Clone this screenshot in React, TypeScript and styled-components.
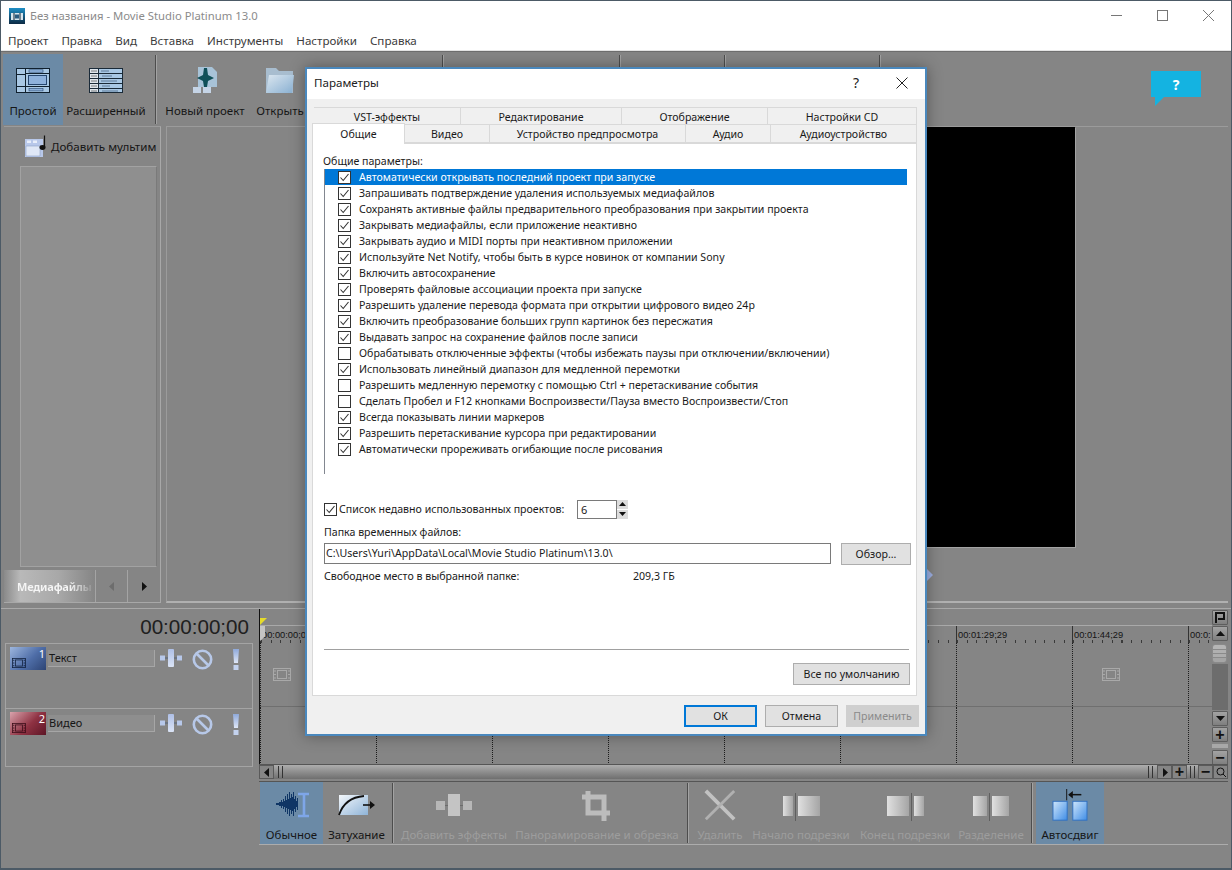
import React from 'react';
import styled, { createGlobalStyle } from 'styled-components';

const GlobalStyle = createGlobalStyle`
  html, body {
    margin: 0;
    padding: 0;
    background: #858585;
  }
  * { box-sizing: border-box; }
`;

const UI_FONT = `"Noto Sans", "Open Sans", sans-serif`;

const Shell = styled.div`
  position: relative;
  width: 1232px;
  height: 870px;
  overflow: hidden;
  display: flex;
  flex-direction: column;
  background: #858585;
  font-family: ${UI_FONT};
  font-size: 12px;
  color: #161616;
  border-left: 1px solid #4c5a66;
  border-right: 1px solid #4c5a66;
  border-top: 1px solid #4c5a66;
  border-bottom: 2px solid #4c5a66;
`;

const TitleBar = styled.div`
  height: 29px;
  display: flex;
  align-items: center;
  background: #fff;
  padding-left: 8px;
  color: #8b8b8b;
  font-size: 11.3px;
`;

const TitleText = styled.span`
  margin-left: 5px;
  flex: 1;
`;

const WinButton = styled.div`
  width: 46px;
  height: 29px;
  display: flex;
  align-items: center;
  justify-content: center;
`;

const MenuBar = styled.div`
  height: 21px;
  display: flex;
  align-items: center;
  gap: 13px;
  background: #fff;
  padding-left: 7px;
  color: #3c3c3c;
  font-size: 11.6px;
  border-bottom: 1px solid #e4e4e4;
`;

const TopToolbar = styled.div`
  height: 75px;
  display: flex;
  align-items: stretch;
  padding: 2px 0 1px 2px;
  border-top: 1px solid #6e6e6e;
`;

const ToolButton = styled.div<{ $w: number; $active?: boolean; $disabled?: boolean; $iconH?: number }>`
  width: ${(p) => p.$w}px;
  flex: none;
  display: flex;
  flex-direction: column;
  align-items: center;
  white-space: nowrap;
  background: ${(p) => (p.$active ? '#6b8aa6' : 'transparent')};
  color: ${(p) => (p.$disabled ? '#9d9d9d' : '#161616')};
  font-size: 11.5px;
  padding-top: 7px;
  > svg {
    height: ${(p) => p.$iconH ?? 38}px;
    flex: none;
  }
  > span {
    margin-top: 4px;
    line-height: 16px;
  }
`;

const ToolSep = styled.div<{ $before: number; $after?: number }>`
  width: 1px;
  flex: none;
  margin: 1px ${(p) => p.$after ?? 0}px 1px ${(p) => p.$before}px;
  background: #4d4d4d;
  box-shadow: 1px 0 0 #a3a3a3;
`;

const HelpBubble = styled.div`
  position: absolute;
  right: 30px;
  top: 70px;
  width: 50px;
  height: 26px;
  background: #14b3e1;
  color: #fff;
  font-weight: 700;
  font-size: 14px;
  display: flex;
  align-items: center;
  justify-content: center;
  &::after {
    content: '';
    position: absolute;
    left: 4px;
    top: 26px;
    border-top: 9px solid #14b3e1;
    border-right: 9px solid transparent;
  }
`;

const Workspace = styled.div`
  height: 477px;
  display: flex;
  gap: 5px;
  padding: 0 3px;
  flex: none;
`;

const MediaPanel = styled.div`
  width: 157px;
  flex: none;
  display: flex;
  flex-direction: column;
  border-top: 1px solid #9b9b9b;
  border-right: 1px solid #a8a8a8;
  border-bottom: 1px solid #a8a8a8;
  font-size: 11.6px;
`;

const AddMedia = styled.div`
  height: 39px;
  flex: none;
  display: flex;
  align-items: center;
  gap: 3px;
  padding-left: 20px;
  white-space: nowrap;
`;

const MediaList = styled.div`
  height: 401px;
  flex: none;
  margin-left: 16px;
  margin-right: 3px;
  background: #8f8f8f;
  border: 1px solid #a2a2a2;
  border-right-color: #7a7a7a;
`;

const MediaTabs = styled.div`
  flex: 1;
  margin-top: 3px;
  display: flex;
`;

const MediaTabLabel = styled.div`
  width: 91px;
  flex: none;
  display: flex;
  align-items: center;
  padding-left: 13px;
  white-space: nowrap;
  font-weight: 700;
  font-size: 11px;
  letter-spacing: -0.2px;
  background: linear-gradient(90deg, #8a8a8a 0%, #b9b9b9 18%, #a8a8a8 60%, #858585 100%);
`;

const FadedText = styled.span`
  background: linear-gradient(90deg, #f5f5f5 70%, rgba(245, 245, 245, 0.1));
  -webkit-background-clip: text;
  background-clip: text;
  color: transparent;
`;

const MediaNav = styled.div`
  width: 32px;
  display: flex;
  align-items: center;
  justify-content: center;
  border-left: 1px solid #a4a4a4;
`;

const PreviewPane = styled.div`
  position: relative;
  flex: 1;
  display: flex;
  justify-content: flex-end;
  align-items: flex-start;
  padding-right: 153px;
  border-top: 1px solid #9b9b9b;
  border-left: 1px solid #9b9b9b;
  border-bottom: 2px solid #b0b0b0;
`;

const PreviewScreen = styled.div`
  width: 400px;
  height: 420px;
  background: #000;
  box-shadow: 1px 1px 0 #a3a3a3;
`;

const SplitterHandle = styled.div`
  position: absolute;
  left: 760px;
  top: 442px;
  border-left: 6px solid #9fb2e6;
  border-top: 6px solid transparent;
  border-bottom: 6px solid transparent;
`;

const TimelineArea = styled.div`
  flex: none;
  margin-top: 5px;
  height: 172px;
  display: grid;
  grid-template-columns: 258px 1fr 16px;
  grid-template-rows: 156px 16px;
  padding-right: 3px;
  border-top: 1px solid #a9a9a9;
`;

const TrackColumn = styled.div`
  grid-row: 1 / 3;
  padding-left: 4px;
`;

const TimeRow = styled.div`
  height: 34px;
  display: flex;
  justify-content: flex-end;
  align-items: center;
  padding: 2px 10px 0 0;
  font-family: "Liberation Sans", Arial, sans-serif;
  font-size: 20.6px;
  color: #202020;
`;

const TrackList = styled.div`
  width: 248px;
  border: 1px solid #a4a4a4;
`;

const TrackRow = styled.div<{ $h: number }>`
  height: ${(p) => p.$h}px;
  display: flex;
  align-items: flex-start;
  padding: 3px 0 0 4px;
  & + & {
    border-top: 1px solid #a4a4a4;
  }
`;

const TrackBadge = styled.div<{ $tone: 'blue' | 'red' }>`
  position: relative;
  width: 36px;
  height: 23px;
  flex: none;
  display: flex;
  align-items: flex-end;
  padding: 0 0 2px 2px;
  background: ${(p) =>
    p.$tone === 'blue'
      ? 'linear-gradient(135deg, #9db6de 0%, #4f6ea8 55%, #2d4474 100%)'
      : 'linear-gradient(135deg, #d9a3ac 0%, #8f3243 55%, #5d1626 100%)'};
`;

const TrackNumber = styled.span`
  position: absolute;
  right: 1px;
  top: 0;
  color: #fff;
  font-size: 11px;
  line-height: 14px;
`;

const TrackName = styled.div`
  width: 107px;
  height: 17px;
  margin: 3px 0 0 2px;
  padding-left: 1px;
  line-height: 16px;
  font-size: 11px;
  background: #8e8e8e;
  border-right: 1px solid #a6a6a6;
  border-bottom: 1px solid #a6a6a6;
`;

const TrackControls = styled.div`
  display: flex;
  gap: 10px;
  margin: 2px 0 0 5px;
`;

const LaneColumn = styled.div`
  min-width: 0;
  overflow: hidden;
  display: flex;
  flex-direction: column;
  border-left: 1px solid #111;
`;

const MarkerBar = styled.div`
  position: relative;
  height: 17px;
  flex: none;
  border-bottom: 1px solid #a9a9a9;
`;

const MarkerFlag = styled.div`
  position: absolute;
  left: 0;
  bottom: 0;
  width: 7px;
  height: 7px;
  background: #e6dc2a;
  clip-path: polygon(0 0, 100% 0, 0 100%);
`;

const Ruler = styled.div`
  height: 17px;
  flex: none;
  display: flex;
  position: relative;
`;

const RulerCell = styled.div`
  width: 116px;
  flex: none;
  padding: 3px 0 0 1px;
  font-family: "Liberation Sans", Arial, sans-serif;
  font-size: 9.3px;
  line-height: 12px;
  color: #141414;
  border-left: 1px solid #333;
  background: repeating-linear-gradient(90deg, #3a3a3a 0 1px, transparent 1px 9.7px) left bottom / 100% 3px no-repeat;
`;

const PlayHandle = styled.div`
  position: absolute;
  left: 0;
  top: 0;
  width: 5px;
  height: 15px;
  background: #c4c4c4;
  clip-path: polygon(0 0, 100% 0, 100% 70%, 0 100%);
`;

const Lane = styled.div<{ $h: number; $line?: boolean }>`
  height: ${(p) => p.$h}px;
  flex: none;
  display: flex;
  border-bottom: ${(p) => (p.$line ? '1px solid #6f6f6f' : 'none')};
`;

const LaneCell = styled.div<{ $offset?: number }>`
  width: 116px;
  flex: none;
  display: flex;
  align-items: center;
  padding-left: ${(p) => p.$offset ?? 0}px;
  border-left: 1px dotted #1c1c1c;
`;

const VScroll = styled.div`
  display: flex;
  flex-direction: column;
  gap: 1px;
  padding-top: 1px;
`;

const ScrollBtn = styled.div`
  width: 16px;
  height: 15px;
  flex: none;
  display: flex;
  align-items: center;
  justify-content: center;
  background: linear-gradient(180deg, #a3a3a3, #7f7f7f);
  border: 1px solid #5e5e5e;
  border-radius: 1px;
  font-family: "Liberation Sans", Arial, sans-serif;
  font-weight: 700;
  font-size: 16px;
  line-height: 1;
  color: #111;
`;

const VThumb = styled.div`
  height: 19px;
  flex: none;
  width: 15px;
  margin-top: 2px;
  background: linear-gradient(180deg, #b5b5b5 0 4px, #8a8a8a 4px 5px, #b0b0b0 5px 8px, #8a8a8a 8px 9px, #adadad 9px 12px, #8a8a8a 12px 13px, #a5a5a5 13px);
  border: 1px solid #8a8a8a;
  border-radius: 3px;
`;

const VTrack = styled.div`
  flex: 1;
  background: #6d6d6d;
`;

const VGrip = styled.div`
  height: 4px;
  flex: none;
  margin: 1px 0;
  background: #a8a8a8;
`;

const HScroll = styled.div`
  grid-column: 2 / 4;
  display: flex;
  align-items: stretch;
  background: linear-gradient(180deg, #adadad, #6f6f6f);
  height: 15px;
  margin-top: -1px;
  border-top: 1px solid #555;
`;

const HSpacer = styled.div`
  flex: 1;
`;

const HGrip = styled.div<{ $gap: number }>`
  width: 5px;
  flex: none;
  margin: 1px ${(p) => p.$gap}px 1px ${(p) => p.$gap}px;
  border-left: 1px solid #333;
  border-right: 1px solid #333;
`;

const HButton = styled.div`
  width: 15px;
  flex: none;
  display: flex;
  align-items: center;
  justify-content: center;
  background: #858585;
  border: 1px solid #5a5a5a;
  font-family: "Liberation Sans", Arial, sans-serif;
  font-weight: 700;
  font-size: 16px;
  line-height: 1;
  color: #111;
`;

const BottomToolbar = styled.div`
  height: 64px;
  flex: none;
  margin: 1px 3px 0 258px;
  display: flex;
  align-items: stretch;
  border-top: 1px solid #555;
  border-bottom: 1px solid #acacac;
  padding-left: 1px;
`;

/* dialog */

const Dialog = styled.div`
  position: absolute;
  left: 304px;
  top: 66px;
  width: 622px;
  height: 669px;
  display: flex;
  flex-direction: column;
  background: #f0f0f0;
  border: 2px solid #4a88bd;
  box-shadow: 0 0 14px rgba(0, 0, 0, 0.35);
  font-size: 10.6px;
  color: #1a1a1a;
`;

const DialogHead = styled.div`
  height: 30px;
  flex: none;
  display: flex;
  align-items: center;
  background: #fff;
  padding: 0 0 3px 7px;
  font-size: 11.6px;
  color: #222;
`;

const DialogTitle = styled.span`
  flex: 1;
`;

const HeadIcon = styled.span`
  width: 46px;
  text-align: center;
  font-size: 14px;
  color: #222;
  display: flex;
  align-items: center;
  justify-content: center;
`;

const TabRow = styled.div<{ $top?: number; $left: number }>`
  display: flex;
  height: ${(p) => (p.$top ? 17 : 19)}px;
  margin-top: ${(p) => p.$top ?? 0}px;
  margin-left: ${(p) => p.$left}px;
  flex: none;
`;

const Tab = styled.div<{ $w: number; $active?: boolean }>`
  width: ${(p) => p.$w}px;
  flex: none;
  position: relative;
  display: flex;
  align-items: center;
  justify-content: center;
  background: ${(p) => (p.$active ? '#fff' : '#f0f0f0')};
  border: 1px solid #d9d9d9;
  border-bottom: ${(p) => (p.$active ? 'none' : '1px solid #d9d9d9')};
  border-left-width: ${(p) => (p.$active ? 1 : 0)}px;
  height: ${(p) => (p.$active ? 21 : 19)}px;
  margin-top: ${(p) => (p.$active ? -1 : 0)}px;
  z-index: ${(p) => (p.$active ? 2 : 1)};
`;

const TabPanel = styled.div`
  flex: none;
  height: 553px;
  margin: 0 8px 0 5px;
  padding: 9px 7px 0 10px;
  background: #fff;
  border: 1px solid #d9d9d9;
  display: flex;
  flex-direction: column;
  line-height: 16px;
`;

const OptionList = styled.div`
  height: 305px;
  width: 583px;
  margin-left: 1px;
  flex: none;
  border-left: 1px solid #828790;
`;

const OptionRow = styled.div<{ $selected?: boolean }>`
  height: 16px;
  display: flex;
  align-items: center;
  padding-left: 13px;
  background: ${(p) => (p.$selected ? '#0078d7' : 'transparent')};
  color: ${(p) => (p.$selected ? '#fff' : '#1a1a1a')};
  white-space: nowrap;
`;

const CheckBoxBox = styled.span`
  width: 13px;
  height: 13px;
  flex: none;
  margin-right: 8px;
  display: flex;
  align-items: center;
  justify-content: center;
  background: #fff;
  border: 1px solid #333;
`;

const RecentRow = styled.div`
  margin-top: 26px;
  height: 18px;
  display: flex;
  align-items: center;
  padding-left: 1px;
  flex: none;
`;

const RecentLabel = styled.span`
  width: 238px;
  margin-left: -6px;
  flex: none;
`;

const SpinInput = styled.div`
  width: 40px;
  height: 19px;
  border: 1px solid #7a7a7a;
  padding-left: 3px;
  line-height: 17px;
  font-size: 11px;
`;

const SpinButtons = styled.div`
  width: 11px;
  height: 19px;
  display: flex;
  flex-direction: column;
  gap: 1px;
`;

const SpinHalf = styled.div`
  flex: 1;
  background: #dcdcdc;
  display: flex;
  align-items: center;
  justify-content: center;
`;

const FolderLabel = styled.div`
  margin-top: 6px;
  margin-left: 1px;
  flex: none;
`;

const PathRow = styled.div`
  margin: 3px -2px 0 1px;
  display: flex;
  gap: 10px;
  flex: none;
`;

const PathInput = styled.div`
  width: 507px;
  height: 21px;
  flex: none;
  border: 1px solid #7a7a7a;
  padding-left: 1px;
  line-height: 18px;
  white-space: nowrap;
`;

const PushButton = styled.div<{ $w: number; $h?: number; $primary?: boolean; $disabled?: boolean }>`
  width: ${(p) => p.$w}px;
  height: ${(p) => p.$h ?? 22}px;
  flex: none;
  display: flex;
  align-items: center;
  justify-content: center;
  background: #e1e1e1;
  border: ${(p) => (p.$primary ? '2px solid #0078d7' : '1px solid #adadad')};
  color: ${(p) => (p.$disabled ? '#8a8a8a' : '#1a1a1a')};
  ${(p) => (p.$disabled ? 'background: #cfcfcf; border-color: #cfcfcf;' : '')}
`;

const FreeRow = styled.div`
  margin-top: 3px;
  margin-left: 1px;
  display: flex;
  flex: none;
`;

const FreeLabel = styled.span`
  width: 309px;
  flex: none;
`;

const Divider = styled.div`
  margin: 65px 0 0 1px;
  height: 1px;
  flex: none;
  background: #a0a0a0;
`;

const DefaultsRow = styled.div`
  margin: 13px -1px 0 0;
  display: flex;
  justify-content: flex-end;
  flex: none;
`;

const DialogFooter = styled.div`
  flex: 1;
  display: flex;
  justify-content: flex-end;
  gap: 8px;
  padding: 9px 6px 0 0;
`;

/* drawings */

const Tick = ({ color = '#333' }: { color?: string }) => (
  <svg width="11" height="11" viewBox="0 0 11 11">
    <path d="M1.5 5.5 L4.2 8.5 L9.5 2" fill="none" stroke={color} strokeWidth="1.1" />
  </svg>
);

const Check = ({ on }: { on: boolean }) => <CheckBoxBox>{on && <Tick />}</CheckBoxBox>;

const FilmGlyph = ({ w = 18, h = 13, color = '#a9a9a9' }: { w?: number; h?: number; color?: string }) => (
  <svg width={w} height={h} viewBox="0 0 18 13">
    <rect x="0.5" y="0.5" width="17" height="12" fill="none" stroke={color} />
    <rect x="4.5" y="2.5" width="9" height="8" fill="none" stroke={color} />
    <path d="M1 3h2M1 6.5h2M1 10h2M15 3h2M15 6.5h2M15 10h2" stroke={color} />
  </svg>
);

const AppGlyph = () => (
  <svg width="16" height="16" viewBox="0 0 16 16" style={{ flex: 'none' }}>
    <defs>
      <linearGradient id="appg" x1="0" y1="0" x2="0" y2="1">
        <stop offset="0" stopColor="#1e8fc6" />
        <stop offset="1" stopColor="#0c2a44" />
      </linearGradient>
    </defs>
    <rect width="16" height="16" fill="url(#appg)" />
    <rect x="2" y="5" width="12" height="7" fill="#d8e6ee" />
    <path d="M5 5v7M11 5v7" stroke="#123" />
    <rect x="6" y="6.5" width="4" height="4" fill="#2c5c80" />
  </svg>
);

const SimpleIcon = () => (
  <svg width="34" height="38" viewBox="0 0 34 38">
    <g fill="#a9c8e4" stroke="#10202e">
      <rect x="0.5" y="7.5" width="33" height="24" />
    </g>
    <path d="M0.5 13.5h9M0.5 25.5h33M9.5 7.5v24M9.5 12.5h24" stroke="#10202e" fill="none" />
    <rect x="12.5" y="14.5" width="18" height="9" fill="#8fb2dc" stroke="#26466e" />
    <rect x="13" y="8.8" width="14" height="2.4" fill="#8fb2dc" stroke="#26466e" strokeWidth="0.6" />
    <rect x="13" y="27.5" width="14" height="2.4" fill="#8fb2dc" stroke="#26466e" strokeWidth="0.6" />
  </svg>
);

const AdvancedIcon = () => (
  <svg width="34" height="38" viewBox="0 0 34 38">
    <rect x="0.5" y="7.5" width="33" height="24" fill="#a9c8e4" stroke="#1a2a38" />
    <rect x="1" y="8" width="8" height="23" fill="#dfe6ec" />
    <path d="M0.5 12.5h33M0.5 17.5h33M0.5 22.5h33M0.5 27.5h33M9.5 7.5v24" stroke="#1a2a38" fill="none" />
    <path d="M2.5 10h5M2.5 15h5M2.5 20h5M2.5 25h5M2.5 30h5" stroke="#111" strokeDasharray="1 1" />
    <path d="M12 10h8M13 15h10M12 20h16M13 25h8M13 30h16" stroke="#5f7a98" />
  </svg>
);

const NewProjectIcon = () => (
  <svg width="26" height="38" viewBox="0 0 26 38">
    <path d="M6 6h14l5 5v15H6z" fill="#a8c3d8" />
    <rect x="1" y="26" width="8" height="6" fill="#c5d4e6" />
    <rect x="11" y="26" width="8" height="6" fill="#c5d4e6" />
    <path d="M5 17 l6 -3 l1 -7 h3 l1 7 l6 3 l-6 3 l-1 6 h-3 l-1 -6z" fill="#0f4f58" />
  </svg>
);

const OpenIcon = () => (
  <svg width="30" height="38" viewBox="0 0 30 38">
    <defs>
      <linearGradient id="openg" x1="0" y1="0" x2="1" y2="1">
        <stop offset="0" stopColor="#dbe6ef" />
        <stop offset="1" stopColor="#89b0d2" />
      </linearGradient>
    </defs>
    <path d="M1 7h10l3 3h14v22H1z" fill="#a8bdcf" />
    <path d="M4 14h25l-2 18H1z" fill="url(#openg)" />
  </svg>
);

const AddMediaIcon = () => (
  <svg width="24" height="23" viewBox="0 0 24 23" style={{ flex: 'none' }}>
    <path d="M1 4h18v18H1z" fill="#b8c8ea" />
    <path d="M2 11h14v10H2z" fill="#dfe7f6" stroke="#8da2c8" strokeWidth="0.6" />
    <rect x="3" y="5.5" width="4" height="2.5" fill="#e8eefa" />
    <rect x="9" y="5.5" width="4" height="2.5" fill="#e8eefa" />
    <path d="M20.5 0.5v12" stroke="#111" strokeWidth="1.2" />
    <ellipse cx="18.5" cy="12.5" rx="3" ry="2.4" fill="#111" />
  </svg>
);

const MotionIcon = () => (
  <svg width="22" height="18" viewBox="0 0 22 18">
    <defs>
      <linearGradient id="motg" x1="0" y1="0" x2="0" y2="1">
        <stop offset="0" stopColor="#aebfe6" />
        <stop offset="1" stopColor="#dbe4f6" />
      </linearGradient>
    </defs>
    <rect x="8" y="0" width="6" height="18" rx="1" fill="url(#motg)" />
    <rect x="0" y="6.5" width="5" height="5" fill="#b7c8ea" />
    <rect x="17" y="6.5" width="5" height="5" fill="#b7c8ea" />
    <path d="M5 9h3M14 9h3" stroke="#55647f" />
  </svg>
);

const MuteIcon = () => (
  <svg width="21" height="21" viewBox="0 0 21 21">
    <circle cx="10.5" cy="10.5" r="8.7" fill="none" stroke="#b7c8e8" strokeWidth="2.6" />
    <path d="M4.5 4.5l12 12" stroke="#b7c8e8" strokeWidth="2.6" />
  </svg>
);

const SoloIcon = () => (
  <svg width="12" height="21" viewBox="0 0 12 21" style={{ marginLeft: 7 }}>
    <defs>
      <linearGradient id="solog" x1="0" y1="0" x2="0" y2="1">
        <stop offset="0" stopColor="#8fa9da" />
        <stop offset="1" stopColor="#dfe7f7" />
      </linearGradient>
    </defs>
    <path d="M3 0h6l-1 14H4z" fill="url(#solog)" />
    <rect x="3.5" y="16" width="5" height="5" fill="#c3d2ee" />
  </svg>
);

const ArrowLeft = ({ color = '#111' }: { color?: string }) => (
  <svg width="6" height="9" viewBox="0 0 6 9">
    <path d="M5 0v9L0 4.5z" fill={color} />
  </svg>
);

const ArrowRight = () => (
  <svg width="6" height="9" viewBox="0 0 6 9">
    <path d="M1 0v9l5-4.500z" fill="#111" />
  </svg>
);

const waveBars = [1, 1, 1, 2, 2, 4, 2, 5, 3, 8, 4, 10, 5, 12, 6, 10, 7, 12, 5, 8, 3, 6];

const NormalIcon = () => (
  <svg width="36" height="34" viewBox="0 0 36 34">
    <path
      d={waveBars.map((h, i) => `M${2.5 + i} ${15 - h}v${h * 2}`).join('')}
      stroke="#0f3565"
      fill="none"
    />
    <path d="M24 5h11M24 27h11M30 5v22" stroke="#7ea6e8" strokeWidth="2.6" fill="none" />
  </svg>
);

const FadeIcon = () => (
  <svg width="38" height="34" viewBox="0 0 38 34">
    <defs>
      <linearGradient id="fadeg" x1="0" y1="0" x2="1" y2="1">
        <stop offset="0" stopColor="#f3f7fb" />
        <stop offset="1" stopColor="#8fb4d8" />
      </linearGradient>
    </defs>
    <rect x="1" y="6" width="29" height="20" fill="url(#fadeg)" />
    <path d="M1 26C5 14 14 8 26 7" stroke="#111" strokeWidth="1.8" fill="none" />
    <path d="M25 16h10" stroke="#111" strokeWidth="1.6" />
    <path d="M32 12l5 4-5 4z" fill="#111" />
  </svg>
);

const EffectsIcon = () => (
  <svg width="36" height="34" viewBox="0 0 36 34">
    <rect x="0" y="12" width="9" height="9" fill="#b7b7b7" />
    <rect x="27" y="12" width="9" height="9" fill="#b7b7b7" />
    <rect x="12" y="5" width="12" height="22" fill="#c4c4c4" />
    <path d="M9 16.500h3M24 16.500h3" stroke="#6c6c6c" />
  </svg>
);

const CropIcon = () => (
  <svg width="30" height="34" viewBox="0 0 30 34">
    <path d="M6 2v22h22M0 8h22v24" stroke="#bcbcbc" strokeWidth="5" fill="none" />
  </svg>
);

const DeleteIcon = () => (
  <svg width="34" height="36" viewBox="0 0 34 36">
    <path d="M2 2l30 30" stroke="#c2c2c2" strokeWidth="4" />
    <path d="M32 2L2 32" stroke="#b0b0b0" strokeWidth="3" />
  </svg>
);

const TrimIcon = ({ left, right, cut }: { left: number; right: number; cut: number }) => (
  <svg width={cut + right + 3} height="34" viewBox={`0 0 ${cut + right + 3} 34`}>
    <defs>
      <linearGradient id="trimg" x1="0" y1="0" x2="1" y2="0">
        <stop offset="0" stopColor="#e0e0e0" />
        <stop offset="1" stopColor="#a5a5a5" />
      </linearGradient>
    </defs>
    <rect x={cut - left - 2} y="7" width={left} height="20" fill="url(#trimg)" />
    <rect x={cut + 3} y="7" width={right} height="20" fill="url(#trimg)" />
    <path d={`M${cut + 0.5} 4v28`} stroke="#5f5f5f" />
  </svg>
);

const RippleIcon = () => (
  <svg width="38" height="36" viewBox="0 0 38 36">
    <defs>
      <linearGradient id="ripg" x1="0" y1="0" x2="1" y2="1">
        <stop offset="0" stopColor="#cfe6fb" />
        <stop offset="1" stopColor="#3f8de6" />
      </linearGradient>
    </defs>
    <path d="M15.500 0v12" stroke="#111" />
    <path d="M18 6h13" stroke="#111" strokeWidth="1.6" />
    <path d="M22 2l-5 4 5 4z" fill="#111" />
    <rect x="1" y="13" width="15" height="20" fill="url(#ripg)" stroke="#2f6fc0" />
    <rect x="22" y="13" width="15" height="20" fill="url(#ripg)" stroke="#2f6fc0" />
  </svg>
);

const MarkerFlagIcon = () => (
  <svg width="10" height="11" viewBox="0 0 10 11">
    <path d="M1 11V1h8v6H3" fill="none" stroke="#111" strokeWidth="2" />
  </svg>
);

const options: [string, boolean][] = [
  ['Автоматически открывать последний проект при запуске', true],
  ['Запрашивать подтверждение удаления используемых медиафайлов', true],
  ['Сохранять активные файлы предварительного преобразования при закрытии проекта', true],
  ['Закрывать медиафайлы, если приложение неактивно', true],
  ['Закрывать аудио и MIDI порты при неактивном приложении', true],
  ['Используйте Net Notify, чтобы быть в курсе новинок от компании Sony', true],
  ['Включить автосохранение', true],
  ['Проверять файловые ассоциации проекта при запуске', true],
  ['Разрешить удаление перевода формата при открытии цифрового видео 24p', true],
  ['Включить преобразование больших групп картинок без пересжатия', true],
  ['Выдавать запрос на сохранение файлов после записи', true],
  ['Обрабатывать отключенные эффекты (чтобы избежать паузы при отключении/включении)', false],
  ['Использовать линейный диапазон для медленной перемотки', true],
  ['Разрешить медленную перемотку с помощью Ctrl + перетаскивание события', false],
  ['Сделать Пробел и F12 кнопками Воспроизвести/Пауза вместо Воспроизвести/Стоп', false],
  ['Всегда показывать линии маркеров', true],
  ['Разрешить перетаскивание курсора при редактировании', true],
  ['Автоматически прореживать огибающие после рисования', true],
];

const rulerMarks = [
  '00:00:00;00',
  '00:00:14;29',
  '00:00:29;29',
  '00:00:44;29',
  '00:00:59;28',
  '00:01:14;29',
  '00:01:29;29',
  '00:01:44;29',
  '00:0:',
];

const topTabs: [string, number][] = [
  ['VST-эффекты', 147],
  ['Редактирование', 161],
  ['Отображение', 146],
  ['Настройки CD', 149],
];

const bottomTabs: [string, number][] = [
  ['Общие', 93],
  ['Видео', 85],
  ['Устройство предпросмотра', 196],
  ['Аудио', 85],
  ['Аудиоустройство', 146],
];

const App: React.FC = () => {
  return (
    <Shell>
      <GlobalStyle />
      <TitleBar>
        <AppGlyph />
        <TitleText>Без названия - Movie Studio Platinum 13.0</TitleText>
        <WinButton>
          <svg width="11" height="11" viewBox="0 0 11 11">
            <path d="M0 5.500h11" stroke="#777" />
          </svg>
        </WinButton>
        <WinButton>
          <svg width="11" height="11" viewBox="0 0 11 11">
            <rect x="0.500" y="0.500" width="10" height="10" fill="none" stroke="#777" />
          </svg>
        </WinButton>
        <WinButton>
          <svg width="11" height="11" viewBox="0 0 11 11">
            <path d="M0 0l11 11M11 0L0 11" stroke="#777" />
          </svg>
        </WinButton>
      </TitleBar>
      <MenuBar>
        <span>Проект</span>
        <span>Правка</span>
        <span>Вид</span>
        <span>Вставка</span>
        <span>Инструменты</span>
        <span>Настройки</span>
        <span>Справка</span>
      </MenuBar>

      <TopToolbar>
        <ToolButton $w={60} $active>
          <SimpleIcon />
          <span>Простой</span>
        </ToolButton>
        <ToolButton $w={86}>
          <AdvancedIcon />
          <span>Расширенный</span>
        </ToolButton>
        <ToolSep $before={6} $after={4} />
        <ToolButton $w={90}>
          <NewProjectIcon />
          <span>Новый проект</span>
        </ToolButton>
        <ToolButton $w={60}>
          <OpenIcon />
          <span>Открыть</span>
        </ToolButton>
        <ToolSep $before={132} />
        <ToolSep $before={176} />
        <ToolSep $before={104} />
        <ToolSep $before={154} />
      </TopToolbar>
      <HelpBubble>?</HelpBubble>

      <Workspace>
        <MediaPanel>
          <AddMedia>
            <AddMediaIcon />
            <span>Добавить мультим</span>
          </AddMedia>
          <MediaList />
          <MediaTabs>
            <MediaTabLabel>
              <FadedText>Медиафайлы</FadedText>
            </MediaTabLabel>
            <MediaNav>
              <ArrowLeft color="#6d6d6d" />
            </MediaNav>
            <MediaNav>
              <ArrowRight />
            </MediaNav>
          </MediaTabs>
        </MediaPanel>
        <PreviewPane>
          <PreviewScreen />
          <SplitterHandle />
        </PreviewPane>
      </Workspace>

      <TimelineArea>
        <TrackColumn>
          <TimeRow>00:00:00;00</TimeRow>
          <TrackList>
            <TrackRow $h={64}>
              <TrackBadge $tone="blue">
                <FilmGlyph w={14} h={10} color="#10203c" />
                <TrackNumber>1</TrackNumber>
              </TrackBadge>
              <TrackName>Текст</TrackName>
              <TrackControls>
                <MotionIcon />
                <MuteIcon />
                <SoloIcon />
              </TrackControls>
            </TrackRow>
            <TrackRow $h={58}>
              <TrackBadge $tone="red">
                <FilmGlyph w={14} h={10} color="#3a0c18" />
                <TrackNumber>2</TrackNumber>
              </TrackBadge>
              <TrackName>Видео</TrackName>
              <TrackControls>
                <MotionIcon />
                <MuteIcon />
                <SoloIcon />
              </TrackControls>
            </TrackRow>
          </TrackList>
        </TrackColumn>

        <LaneColumn>
          <MarkerBar>
            <MarkerFlag />
          </MarkerBar>
          <Ruler>
            {rulerMarks.map((mark) => (
              <RulerCell key={mark}>{mark}</RulerCell>
            ))}
            <PlayHandle />
          </Ruler>
          <Lane $h={64} $line>
            <LaneCell $offset={12}>
              <FilmGlyph />
            </LaneCell>
            {rulerMarks.slice(1, 7).map((mark) => (
              <LaneCell key={mark} />
            ))}
            <LaneCell $offset={29}>
              <FilmGlyph />
            </LaneCell>
            <LaneCell />
          </Lane>
          <Lane $h={58}>
            {rulerMarks.map((mark) => (
              <LaneCell key={mark} />
            ))}
          </Lane>
        </LaneColumn>

        <VScroll>
          <ScrollBtn>
            <MarkerFlagIcon />
          </ScrollBtn>
          <ScrollBtn>
            <svg width="9" height="5" viewBox="0 0 9 5">
              <path d="M0 5h9L4.500 0z" fill="#111" />
            </svg>
          </ScrollBtn>
          <VThumb />
          <VTrack />
          <ScrollBtn>
            <svg width="9" height="5" viewBox="0 0 9 5">
              <path d="M0 0h9L4.500 5z" fill="#111" />
            </svg>
          </ScrollBtn>
          <ScrollBtn>+</ScrollBtn>
          <VGrip />
          <ScrollBtn>−</ScrollBtn>
        </VScroll>

        <HScroll>
          <HButton>
            <ArrowLeft />
          </HButton>
          <HGrip $gap={4} />
          <HSpacer />
          <HGrip $gap={4} />
          <HButton>
            <ArrowRight />
          </HButton>
          <HButton>+</HButton>
          <HGrip $gap={3} />
          <HButton>−</HButton>
          <HButton>
            <svg width="10" height="10" viewBox="0 0 10 10">
              <circle cx="4.500" cy="4.500" r="3.500" fill="none" stroke="#111" />
              <path d="M7 7l3 3" stroke="#111" />
            </svg>
          </HButton>
        </HScroll>
      </TimelineArea>

      <BottomToolbar>
        <ToolButton $w={63} $active $iconH={34}>
          <NormalIcon />
          <span>Обычное</span>
        </ToolButton>
        <ToolButton $w={67} $iconH={34}>
          <FadeIcon />
          <span>Затухание</span>
        </ToolButton>
        <ToolSep $before={2} $after={7} />
        <ToolButton $w={108} $disabled $iconH={34}>
          <EffectsIcon />
          <span>Добавить эффекты</span>
        </ToolButton>
        <ToolButton $w={178} $disabled $iconH={34}>
          <CropIcon />
          <span>Панорамирование и обрезка</span>
        </ToolButton>
        <ToolSep $before={1} $after={7} />
        <ToolButton $w={50} $disabled $iconH={34}>
          <DeleteIcon />
          <span>Удалить</span>
        </ToolButton>
        <ToolButton $w={112} $disabled $iconH={34}>
          <TrimIcon left={10} right={22} cut={12} />
          <span>Начало подрезки</span>
        </ToolButton>
        <ToolButton $w={96} $disabled $iconH={34}>
          <TrimIcon left={22} right={10} cut={24} />
          <span>Конец подрезки</span>
        </ToolButton>
        <ToolButton $w={76} $disabled $iconH={34}>
          <TrimIcon left={14} right={17} cut={16} />
          <span>Разделение</span>
        </ToolButton>
        <ToolSep $before={2} $after={4} />
        <ToolButton $w={68} $active $iconH={34}>
          <RippleIcon />
          <span>Автосдвиг</span>
        </ToolButton>
      </BottomToolbar>

      <Dialog>
        <DialogHead>
          <DialogTitle>Параметры</DialogTitle>
          <HeadIcon>?</HeadIcon>
          <HeadIcon>
            <svg width="12" height="12" viewBox="0 0 12 12">
              <path d="M0.500 0.500l11 11M11.500 0.500l-11 11" stroke="#222" />
            </svg>
          </HeadIcon>
        </DialogHead>
        <TabRow $top={8} $left={7}>
          {topTabs.map(([label, w]) => (
            <Tab key={label} $w={w}>
              {label}
            </Tab>
          ))}
        </TabRow>
        <TabRow $left={5}>
          {bottomTabs.map(([label, w], i) => (
            <Tab key={label} $w={w} $active={i === 0}>
              {label}
            </Tab>
          ))}
        </TabRow>
        <TabPanel>
          <div>Общие параметры:</div>
          <OptionList>
            {options.map(([label, on], i) => (
              <OptionRow key={label} $selected={i === 0}>
                <Check on={on} />
                {label}
              </OptionRow>
            ))}
          </OptionList>
          <RecentRow>
            <Check on />
            <RecentLabel>Список недавно использованных проектов:</RecentLabel>
            <SpinInput>6</SpinInput>
            <SpinButtons>
              <SpinHalf>
                <svg width="7" height="4" viewBox="0 0 7 4">
                  <path d="M0 4h7L3.500 0z" fill="#111" />
                </svg>
              </SpinHalf>
              <SpinHalf>
                <svg width="7" height="4" viewBox="0 0 7 4">
                  <path d="M0 0h7L3.500 4z" fill="#111" />
                </svg>
              </SpinHalf>
            </SpinButtons>
          </RecentRow>
          <FolderLabel>Папка временных файлов:</FolderLabel>
          <PathRow>
            <PathInput>C:\Users\Yuri\AppData\Local\Movie Studio Platinum\13.0\</PathInput>
            <PushButton $w={70}>Обзор...</PushButton>
          </PathRow>
          <FreeRow>
            <FreeLabel>Свободное место в выбранной папке:</FreeLabel>
            <span>209,3 ГБ</span>
          </FreeRow>
          <Divider />
          <DefaultsRow>
            <PushButton $w={117}>Все по умолчанию</PushButton>
          </DefaultsRow>
        </TabPanel>
        <DialogFooter>
          <PushButton $w={73} $primary>
            ОК
          </PushButton>
          <PushButton $w={73}>Отмена</PushButton>
          <PushButton $w={73} $disabled>
            Применить
          </PushButton>
        </DialogFooter>
      </Dialog>
    </Shell>
  );
};

export default App;
